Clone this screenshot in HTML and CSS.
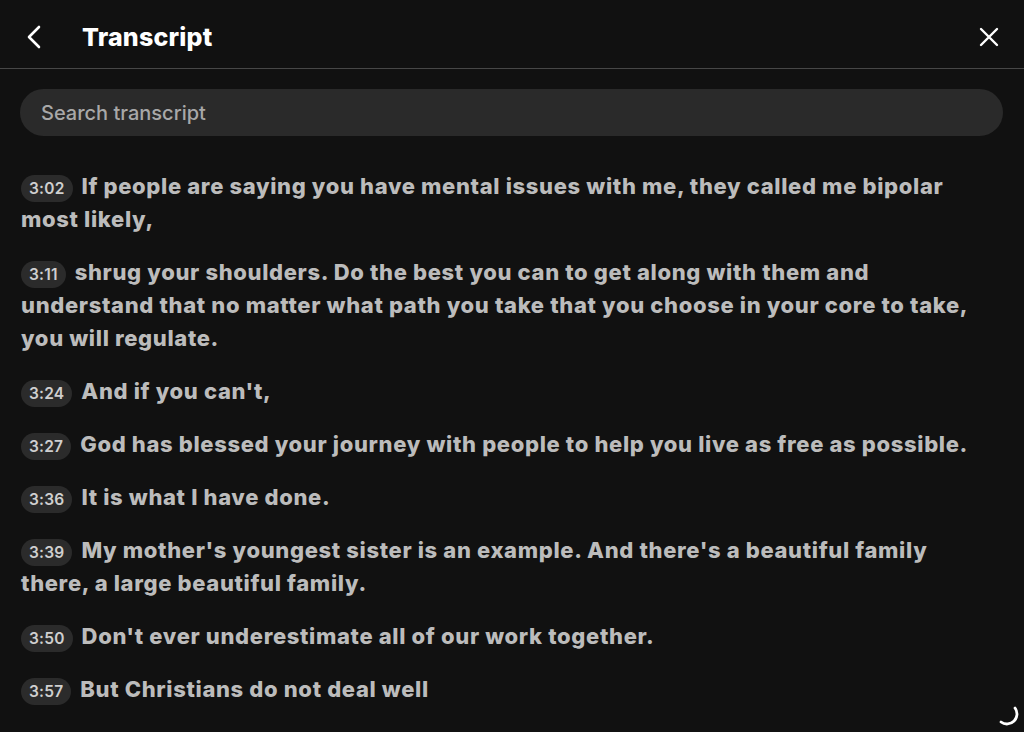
FILE: index.html
```html
<!DOCTYPE html>
<html lang="en">
<head>
<meta charset="utf-8">
<title>Transcript</title>
<link rel="stylesheet" href="styles.css">
</head>
<body>
<div class="panel">
  <header class="header">
    <button class="icon-btn back" aria-label="Back">
      <svg width="20" height="24" viewBox="0 0 20 24"><path d="M14 2 L4 12 L14 22" fill="none" stroke="#fff" stroke-width="2.6" stroke-linecap="round" stroke-linejoin="round"/></svg>
    </button>
    <h1 class="title">Transcript</h1>
    <button class="icon-btn close" aria-label="Close">
      <svg width="20" height="20" viewBox="0 0 20 20"><path d="M2 2 L18 18 M18 2 L2 18" fill="none" stroke="#fff" stroke-width="2.4" stroke-linecap="round"/></svg>
    </button>
  </header>
  <div class="search-wrap">
    <div class="search">Search transcript</div>
  </div>
  <div class="list">
    <p class="seg"><span class="ts">3:02</span>If people are saying you have mental issues with me, they called me bipolar most likely,</p>
    <p class="seg"><span class="ts">3:11</span>shrug your shoulders. Do the best you can to get along with them and understand that no matter what path you take that you choose in your core to take, you will regulate.</p>
    <p class="seg"><span class="ts">3:24</span>And if you can't,</p>
    <p class="seg"><span class="ts">3:27</span>God has blessed your journey with people to help you live as free as possible.</p>
    <p class="seg"><span class="ts">3:36</span>It is what I have done.</p>
    <p class="seg"><span class="ts">3:39</span>My mother's youngest sister is an example. And there's a beautiful family there, a large beautiful family.</p>
    <p class="seg"><span class="ts">3:50</span>Don't ever underestimate all of our work together.</p>
    <p class="seg"><span class="ts">3:57</span>But Christians do not deal well</p>
  </div>
  <svg class="spinner" width="24" height="24" viewBox="0 0 24 24"><path d="M19 4 A10 10 0 0 1 5 18" fill="none" stroke="#fff" stroke-width="2.8" stroke-linecap="round"/></svg>
</div>
</body>
</html>
```
FILE: styles.css
```css
* { box-sizing: border-box; }
html, body {
  margin: 0;
  padding: 0;
  background: #111111;
  height: 100%;
  overflow: hidden;
}
.panel {
  position: relative;
  width: 1024px;
  height: 732px;
  background: #111111;
  font-family: Inter, "Noto Sans", "Liberation Sans", sans-serif;
  color: #bdbdbd;
}
.header {
  height: 69px;
  display: flex;
  align-items: center;
  border-bottom: 1px solid #474747;
  padding: 6px 20px 0 23px;
}
.icon-btn {
  background: none;
  border: 0;
  padding: 0;
  display: flex;
  align-items: center;
  justify-content: center;
  cursor: pointer;
}
.back { width: 24px; height: 30px; }
.title {
  margin: 0 0 0 35px;
  font-size: 25px;
  font-weight: 800;
  color: #ffffff;
  letter-spacing: 0.2px;
  flex: 1;
}
.close { width: 30px; height: 30px; }
.search-wrap { padding: 20px 20px 0 20px; }
.search {
  width: 983px;
  height: 47px;
  border-radius: 24px;
  background: #2a2a2a;
  display: flex;
  align-items: center;
  padding-left: 21px;
  font-size: 20px;
  font-weight: 500;
  color: #a8a8a8;
}
.list { padding: 34px 38px 0 21px; }
.seg {
  margin: 0 0 20px 0;
  font-size: 22px;
  line-height: 33px;
  font-weight: 800;
  letter-spacing: 0.65px;
  color: #bcbcbc;
}
.ts {
  display: inline-block;
  background: #2b2b2b;
  color: #cfcfcf;
  font-size: 15.5px;
  font-weight: 600;
  line-height: 27px;
  height: 27px;
  padding: 0 8px;
  border-radius: 14px;
  margin-right: 9px;
  letter-spacing: 0.2px;
  vertical-align: top;
  margin-top: 5px;
}
.spinner {
  position: absolute;
  right: 4px;
  bottom: 4px;
}
```
